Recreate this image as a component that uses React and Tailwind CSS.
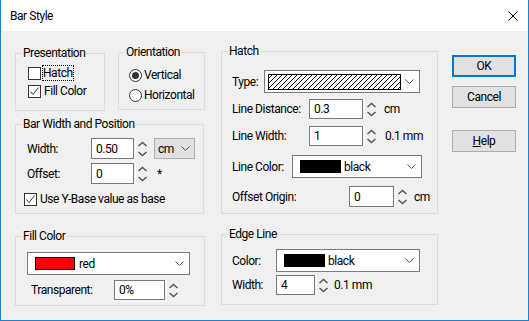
import React from "react";

const Check = ({ checked }) => (
  <span className="w-[13px] h-[13px] border border-[#333333] bg-white shrink-0 flex items-center justify-center">
    {checked && (
      <svg width="11" height="11" viewBox="0 0 11 11" className="block">
        <path d="M1.5 5.5 L4 8.5 L9.5 1.5" fill="none" stroke="#333" strokeWidth="1" />
      </svg>
    )}
  </span>
);

const Radio = ({ checked }) => (
  <span className="w-[13px] h-[13px] rounded-full border border-[#333333] bg-white shrink-0 flex items-center justify-center">
    {checked && <span className="w-[7px] h-[7px] rounded-full bg-[#333333]" />}
  </span>
);

const Spin = ({ h }) => (
  <svg width="16" height={h} viewBox={`0 0 16 ${h}`} className="block shrink-0">
    <line x1="1.5" y1="0" x2="1.5" y2={h} stroke="#ffffff" strokeWidth="1" />
    <path d="M4.5 8 L8.5 4.5 L12.5 8" fill="none" stroke="#555" strokeWidth="1.5" />
    <path d={`M4.5 ${h - 7} L8.5 ${h - 3.5} L12.5 ${h - 7}`} fill="none" stroke="#555" strokeWidth="1.5" />
  </svg>
);

const Chev = () => (
  <svg width="9" height="5" viewBox="0 0 9 5" className="block shrink-0">
    <path d="M0.5 0.5 L4.5 4.5 L8.5 0.5" fill="none" stroke="#555" strokeWidth="1" />
  </svg>
);

const Group = ({ title, cls, inner, children }) => (
  <fieldset className={"border border-[#dcdcdc] m-0 p-0 min-w-0 shrink-0 " + cls}>
    <legend className="ml-[6px] px-[1px] leading-[16px]">{title}</legend>
    <div className={inner}>{children}</div>
  </fieldset>
);

const hatchLines = [];
for (let k = -16; k < 135; k += 5) hatchLines.push(k);

const Hatch = () => (
  <svg width="133" height="16" viewBox="0 0 133 16" className="block shrink-0">
    <rect x="0" y="0" width="133" height="16" fill="#fff" />
    {hatchLines.map((k) => (
      <line key={k} x1={k} y1="16" x2={k + 16} y2="0" stroke="#000" strokeWidth="1" />
    ))}
    <rect x="0.5" y="0.5" width="132" height="15" fill="none" stroke="#000" strokeWidth="1" />
  </svg>
);

export default function App() {
  return (
    <div className="w-[529px] h-[321px] flex flex-col border-x border-b border-[#1883d7] bg-[#f0f0f0] text-[12px] leading-[16px] tracking-[-0.45px] text-black font-['Roboto',sans-serif] overflow-hidden">
      <div className="h-[31px] bg-white flex items-center justify-between pl-[9px] pr-[10px] shrink-0">
        <span>Bar Style</span>
        <svg width="10" height="10" viewBox="0 0 10 10" className="block">
          <path d="M0.5 0.5 L9.5 9.5 M9.5 0.5 L0.5 9.5" stroke="#000" strokeWidth="1" fill="none" />
        </svg>
      </div>
      <div className="flex flex-1 pl-[14px]">
        {/* Left column */}
        <div className="flex flex-col w-[190px] pt-[13px] shrink-0">
          <div className="flex items-start">
            <Group title="Presentation" cls="w-[90px] h-[66px] mt-[1px]" inner="pt-[3px] pl-[12px] flex flex-col">
              <div className="h-[18px] flex items-center">
                <Check />
                <span className="ml-[1px] border border-dotted border-black leading-[14px]">Hatch</span>
              </div>
              <div className="h-[18px] flex items-center">
                <Check checked />
                <span className="ml-[3px]">Fill Color</span>
              </div>
            </Group>
            <Group title="Orientation" cls="w-[87px] h-[66px] ml-[13px]" inner="pt-[6px] pl-[10px] flex flex-col">
              <div className="h-[18px] flex items-center">
                <Radio checked />
                <span className="ml-[2px]">Vertical</span>
              </div>
              <div className="h-[18px] mt-[2px] flex items-center">
                <Radio />
                <span className="ml-[2px]">Horizontal</span>
              </div>
            </Group>
          </div>
          <Group title="Bar Width and Position" cls="w-[189px] h-[98px] mt-[5px]" inner="pt-[6px] pl-[11px] flex flex-col">
            <div className="h-[21px] flex items-center">
              <span className="w-[64px] shrink-0">Width:</span>
              <div className="w-[43px] h-[21px] border border-[#7a7a7a] bg-white pl-[4px] flex items-center shrink-0">0.50</div>
              <Spin h={21} />
              <div className="ml-[4px] w-[41px] h-[21px] bg-[#e1e1e1] border border-[#adadad] flex items-center justify-between pl-[3px] pr-[4px] shrink-0">
                <span>cm</span>
                <Chev />
              </div>
            </div>
            <div className="h-[21px] mt-[4px] flex items-center">
              <span className="w-[64px] shrink-0">Offset:</span>
              <div className="w-[43px] h-[21px] border border-[#7a7a7a] bg-white pl-[4px] flex items-center shrink-0">0</div>
              <Spin h={21} />
              <span className="ml-[7px]">*</span>
            </div>
            <div className="h-[18px] mt-[6px] -ml-[3px] flex items-center">
              <Check checked />
              <span className="ml-[3px]">Use Y-Base value as base</span>
            </div>
          </Group>
          <Group title="Fill Color" cls="w-[190px] h-[78px] mt-[14px]" inner="pt-[8px] pl-[11px] flex flex-col">
            <div className="w-[163px] h-[23px] border border-[#7a7a7a] bg-white flex items-center pl-[7px] pr-[5px]">
              <span className="w-[40px] h-[13px] bg-[#ff0000] border border-black shrink-0" />
              <span className="ml-[4px]">red</span>
              <span className="ml-auto"><Chev /></span>
            </div>
            <div className="h-[20px] mt-[5px] ml-[4px] flex items-center">
              <span className="w-[83px] shrink-0">Transparent:</span>
              <div className="w-[51px] h-[20px] border border-[#7a7a7a] bg-white pl-[4px] flex items-center shrink-0">0%</div>
              <Spin h={20} />
            </div>
          </Group>
        </div>

        {/* Middle column */}
        <div className="flex flex-col w-[217px] ml-[16px] pt-[12px] shrink-0">
          <Group title="Hatch" cls="w-[217px] h-[171px]" inner="pt-[11px] pl-[10px] flex flex-col">
            <div className="h-[23px] flex items-center">
              <span className="w-[32px] shrink-0">Type:</span>
              <div className="w-[156px] h-[23px] border border-[#7a7a7a] bg-white flex items-center pl-[3px] pr-[5px] shrink-0">
                <Hatch />
                <span className="ml-auto"><Chev /></span>
              </div>
            </div>
            <div className="h-[20px] mt-[6px] flex items-center">
              <span className="w-[77px] shrink-0">Line Distance:</span>
              <div className="w-[54px] h-[20px] border border-[#7a7a7a] bg-white pl-[4px] flex items-center shrink-0">0.3</div>
              <Spin h={20} />
              <span className="ml-[5px]">cm</span>
            </div>
            <div className="h-[20px] mt-[7px] flex items-center">
              <span className="w-[77px] shrink-0">Line Width:</span>
              <div className="w-[54px] h-[20px] border border-[#7a7a7a] bg-white pl-[4px] flex items-center shrink-0">1</div>
              <Spin h={20} />
              <span className="ml-[6px]">0.1 mm</span>
            </div>
            <div className="h-[23px] mt-[9px] flex items-center">
              <span className="w-[60px] shrink-0">Line Color:</span>
              <div className="w-[130px] h-[23px] border border-[#7a7a7a] bg-white flex items-center pl-[7px] pr-[5px] shrink-0">
                <span className="w-[41px] h-[13px] bg-black shrink-0" />
                <span className="ml-[3px]">black</span>
                <span className="ml-auto"><Chev /></span>
              </div>
            </div>
            <div className="h-[21px] mt-[8px] flex items-center">
              <span className="w-[117px] shrink-0">Offset Origin:</span>
              <div className="w-[45px] h-[21px] border border-[#7a7a7a] bg-white pl-[4px] flex items-center shrink-0">0</div>
              <Spin h={21} />
              <span className="ml-[4px]">cm</span>
            </div>
          </Group>
          <Group title="Edge Line" cls="w-[217px] h-[79px] mt-[12px]" inner="pt-[7px] pl-[10px] flex flex-col">
            <div className="h-[23px] flex items-center">
              <span className="w-[44px] shrink-0">Color:</span>
              <div className="w-[144px] h-[23px] border border-[#7a7a7a] bg-white flex items-center pl-[7px] pr-[5px] shrink-0">
                <span className="w-[41px] h-[13px] bg-black shrink-0" />
                <span className="ml-[3px]">black</span>
                <span className="ml-auto"><Chev /></span>
              </div>
            </div>
            <div className="h-[20px] mt-[3px] flex items-center">
              <span className="w-[44px] shrink-0">Width:</span>
              <div className="w-[39px] h-[20px] border border-[#7a7a7a] bg-white pl-[4px] flex items-center shrink-0">4</div>
              <Spin h={20} />
              <span className="ml-[3px]">0.1 mm</span>
            </div>
          </Group>
        </div>

        {/* Buttons */}
        <div className="flex flex-col w-[64px] ml-[14px] pt-[24px] shrink-0">
          <div className="h-[22px] border-2 border-[#0078d7] bg-[#e1e1e1] flex items-center justify-center">OK</div>
          <div className="h-[22px] mt-[9px] border border-[#adadad] bg-[#e1e1e1] flex items-center justify-center">Cancel</div>
          <div className="h-[22px] mt-[22px] border border-[#adadad] bg-[#e1e1e1] flex items-center justify-center">
            <span><span className="underline">H</span>elp</span>
          </div>
        </div>
      </div>
    </div>
  );
}
